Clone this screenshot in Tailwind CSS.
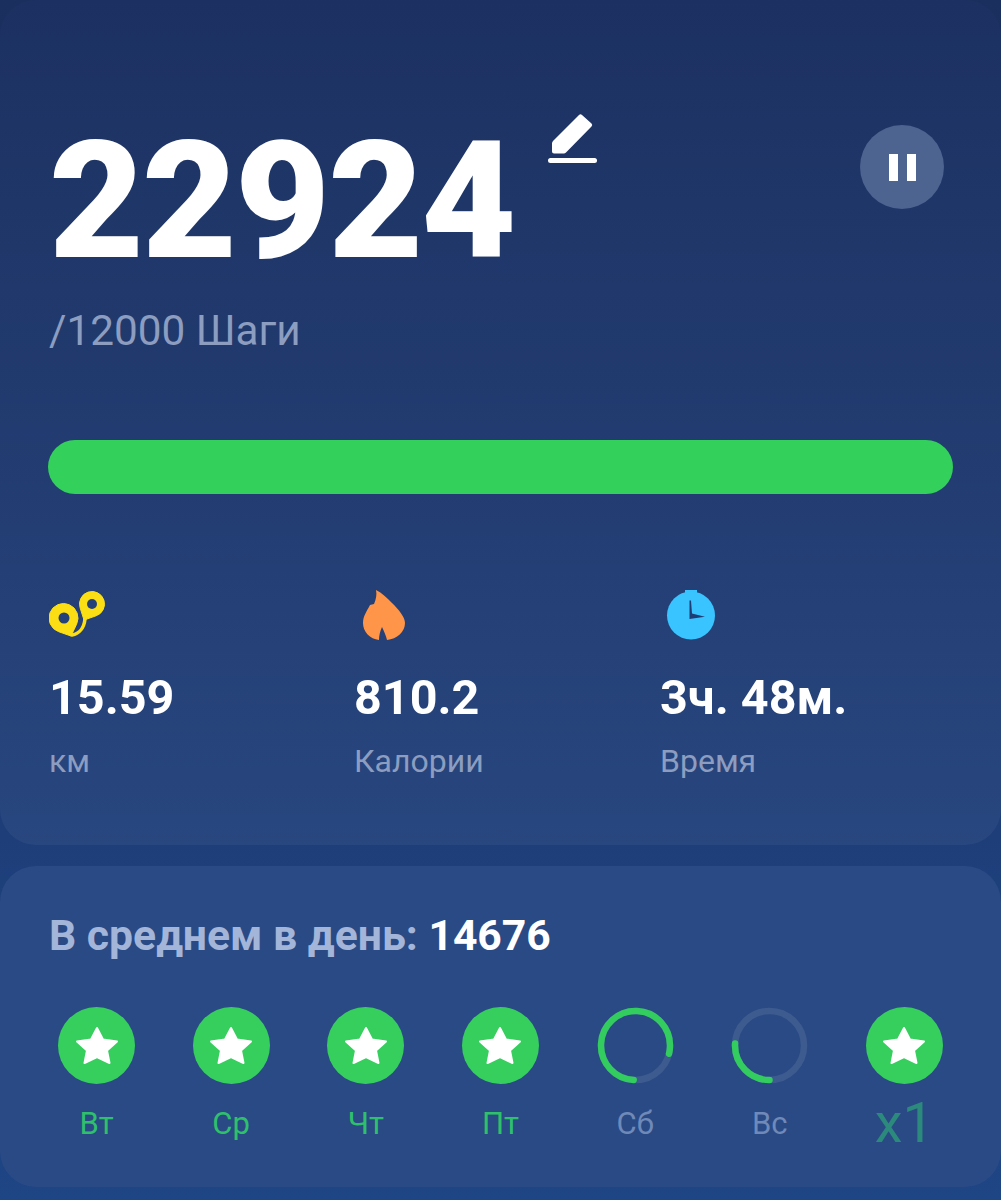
<!DOCTYPE html>
<html lang="ru">
<head>
  <meta charset="UTF-8" />
  <meta name="viewport" content="width=device-width, initial-scale=1.0" />
  <title>Шаги</title>
  <script src="https://cdn.jsdelivr.net/npm/@tailwindcss/browser@4"></script>
</head>
<body class="font-['Roboto',sans-serif] bg-gradient-to-b from-[#1a2f5e] to-[#1e4585]">
  <div class="w-[1001px] h-[1200px] overflow-hidden flex flex-col">

    <!-- steps card -->
    <section class="h-[845px] shrink-0 rounded-[36px] bg-gradient-to-b from-[#1c3161] to-[#28467f] pl-[49px] pr-[48px] pt-[106px]">
      <div class="flex items-start justify-between">
        <div class="flex items-start">
          <div class="text-[164px] leading-[190px] font-black tracking-[-2px] text-white">22924</div>
          <svg class="ml-[34px] mt-[6px]" width="50" height="52" viewBox="0 0 50 52">
            <path d="M31 3 Q32.500 1.500 34 3 L43.500 11.500 Q45 13 43.500 14.500 L18 40.500 Q17 41.500 16 41.500 L6 41.500 Q4 41.500 4 39.500 L4 31.500 Q4 30 5 29 Z" fill="#fff" />
            <rect x="0" y="46" width="49" height="5" rx="2.500" fill="#fff" />
          </svg>
        </div>
        <button class="mt-[19px] mr-[9px] w-[84px] h-[84px] rounded-full bg-[#4d6390] flex items-center justify-center gap-[9px]">
          <span class="w-[9px] h-[27px] bg-white"></span>
          <span class="w-[9px] h-[27px] bg-white"></span>
        </button>
      </div>

      <div class="mt-[10px] text-[42.300px] leading-[50px] text-[#8c9dc0]">/12000 Шаги</div>

      <!-- progress bar -->
      <div class="mt-[84px] -ml-[1px] h-[54px] rounded-full bg-[#33d05c]"></div>

      <!-- distance, calories, time -->
      <div class="mt-[96px] grid grid-cols-[305px_306px_1fr]">
        <div>
          <svg class="h-[54px] w-[60px]" width="60" height="54" viewBox="0 0 60 54">
            <path d="M23 45 C30 44 35 38 36 29" fill="none" stroke="#fbdf14" stroke-width="3.500" stroke-linecap="round" />
            <path d="M47.100 25.800 L35 30 L31.100 17.800 A12.500 12.500 0 1 1 47.100 25.800 Z" fill="#fbdf14" stroke="#fbdf14" stroke-width="1" stroke-linejoin="round" />
            <path d="M27.600 34.200 L22 46 L9.700 41.700 A14.500 14.500 0 1 1 27.600 34.200 Z" fill="#fbdf14" stroke="#fbdf14" stroke-width="1" stroke-linejoin="round" />
            <circle cx="43" cy="14" r="5" fill="#24417a" />
            <circle cx="15" cy="28" r="5.500" fill="#24417a" />
          </svg>
          <div class="mt-[27px] text-[48.500px] leading-[54px] font-bold text-white">15.59</div>
          <div class="mt-[18px] text-[32px] leading-[36px] text-[#8c9dc0]">км</div>
        </div>
        <div>
          <svg class="h-[54px] w-[60px]" width="60" height="54" viewBox="0 0 60 54">
            <path d="M22 0 C28 3 33 8 38 13 C45 20 51 27 51 33 C51 42 43 49 33 50 C32 46 30 41 28 37 C26 41 25 46 25 50 C16 49 9 42 9 33 C9 26 13 21 16 15 L20 14 C22 9 23 5 22 0 Z" fill="#ff9548" />
          </svg>
          <div class="mt-[27px] text-[48.500px] leading-[54px] font-bold text-white">810.2</div>
          <div class="mt-[18px] text-[32px] leading-[36px] text-[#8c9dc0]">Калории</div>
        </div>
        <div>
          <svg class="h-[54px] w-[60px]" width="60" height="54" viewBox="0 0 60 54">
            <path d="M25 0 L37 0 L37 3 L39 6 L23 6 L25 3 Z" fill="#39c3ff" />
            <circle cx="31" cy="25.500" r="24" fill="#39c3ff" />
            <path d="M29.500 10.500 L31 10.500 L32 23.500 L45 26.700 L29.500 29 Z" fill="#1f3d74" />
          </svg>
          <div class="mt-[27px] text-[48.500px] leading-[54px] font-bold text-white">3ч. 48м.</div>
          <div class="mt-[18px] text-[32px] leading-[36px] text-[#8c9dc0]">Время</div>
        </div>
      </div>
    </section>

    <!-- weekly average card -->
    <section class="mt-[21px] h-[321px] shrink-0 rounded-[36px] bg-[#2a4a85] pt-[44px] px-[58px]">
      <div class="-ml-[9px] text-[42.700px] leading-[50px] font-bold text-[#a3b5d8]">В среднем в день: <span class="text-white">14676</span></div>

      <div class="mt-[47px] flex justify-between">
        <div class="w-[77px] flex flex-col items-center">
          <div class="w-[77px] h-[77px] rounded-full bg-[#36cf5e] flex items-center justify-center">
            <svg width="44" height="40" viewBox="0 0 44 40"><path d="M22 2 L28 13.500 L42 15.500 L32 24.500 L34.500 37 L22 31 L9.500 37 L12 24.500 L2 15.500 L16 13.500 Z" fill="#fff" stroke="#fff" stroke-width="2" stroke-linejoin="round" /></svg>
          </div>
          <div class="mt-[23px] text-[31px] leading-[34px] text-[#2fc06c]">Вт</div>
        </div>
        <div class="w-[77px] flex flex-col items-center">
          <div class="w-[77px] h-[77px] rounded-full bg-[#36cf5e] flex items-center justify-center">
            <svg width="44" height="40" viewBox="0 0 44 40"><path d="M22 2 L28 13.500 L42 15.500 L32 24.500 L34.500 37 L22 31 L9.500 37 L12 24.500 L2 15.500 L16 13.500 Z" fill="#fff" stroke="#fff" stroke-width="2" stroke-linejoin="round" /></svg>
          </div>
          <div class="mt-[23px] text-[31px] leading-[34px] text-[#2fc06c]">Ср</div>
        </div>
        <div class="w-[77px] flex flex-col items-center">
          <div class="w-[77px] h-[77px] rounded-full bg-[#36cf5e] flex items-center justify-center">
            <svg width="44" height="40" viewBox="0 0 44 40"><path d="M22 2 L28 13.500 L42 15.500 L32 24.500 L34.500 37 L22 31 L9.500 37 L12 24.500 L2 15.500 L16 13.500 Z" fill="#fff" stroke="#fff" stroke-width="2" stroke-linejoin="round" /></svg>
          </div>
          <div class="mt-[23px] text-[31px] leading-[34px] text-[#2fc06c]">Чт</div>
        </div>
        <div class="w-[77px] flex flex-col items-center">
          <div class="w-[77px] h-[77px] rounded-full bg-[#36cf5e] flex items-center justify-center">
            <svg width="44" height="40" viewBox="0 0 44 40"><path d="M22 2 L28 13.500 L42 15.500 L32 24.500 L34.500 37 L22 31 L9.500 37 L12 24.500 L2 15.500 L16 13.500 Z" fill="#fff" stroke="#fff" stroke-width="2" stroke-linejoin="round" /></svg>
          </div>
          <div class="mt-[23px] text-[31px] leading-[34px] text-[#2fc06c]">Пт</div>
        </div>
        <div class="w-[77px] flex flex-col items-center">
          <svg width="77" height="77" viewBox="0 0 77 77">
            <circle cx="38.500" cy="38.500" r="34.500" fill="none" stroke="#3e5b90" stroke-width="6.500" />
            <circle cx="38.500" cy="38.500" r="34.500" fill="none" stroke="#33cc5f" stroke-width="6.500" stroke-linecap="round" pathLength="100" stroke-dasharray="78 100" transform="rotate(93 38.500 38.500)" />
          </svg>
          <div class="mt-[23px] text-[31px] leading-[34px] text-[#6f89b8]">Сб</div>
        </div>
        <div class="w-[77px] flex flex-col items-center">
          <svg width="77" height="77" viewBox="0 0 77 77">
            <circle cx="38.500" cy="38.500" r="34.500" fill="none" stroke="#3e5b90" stroke-width="6.500" />
            <circle cx="38.500" cy="38.500" r="34.500" fill="none" stroke="#33cc5f" stroke-width="6.500" stroke-linecap="round" pathLength="100" stroke-dasharray="26 100" transform="rotate(90 38.500 38.500)" />
          </svg>
          <div class="mt-[23px] text-[31px] leading-[34px] text-[#6f89b8]">Вс</div>
        </div>
        <div class="w-[77px] flex flex-col items-center">
          <div class="w-[77px] h-[77px] rounded-full bg-[#36cf5e] flex items-center justify-center">
            <svg width="44" height="40" viewBox="0 0 44 40"><path d="M22 2 L28 13.500 L42 15.500 L32 24.500 L34.500 37 L22 31 L9.500 37 L12 24.500 L2 15.500 L16 13.500 Z" fill="#fff" stroke="#fff" stroke-width="2" stroke-linejoin="round" /></svg>
          </div>
          <div class="mt-[7px] text-[56px] leading-[64px] text-[#2b8a7c]">x1</div>
        </div>
      </div>
    </section>
  </div>
</body>
</html>
